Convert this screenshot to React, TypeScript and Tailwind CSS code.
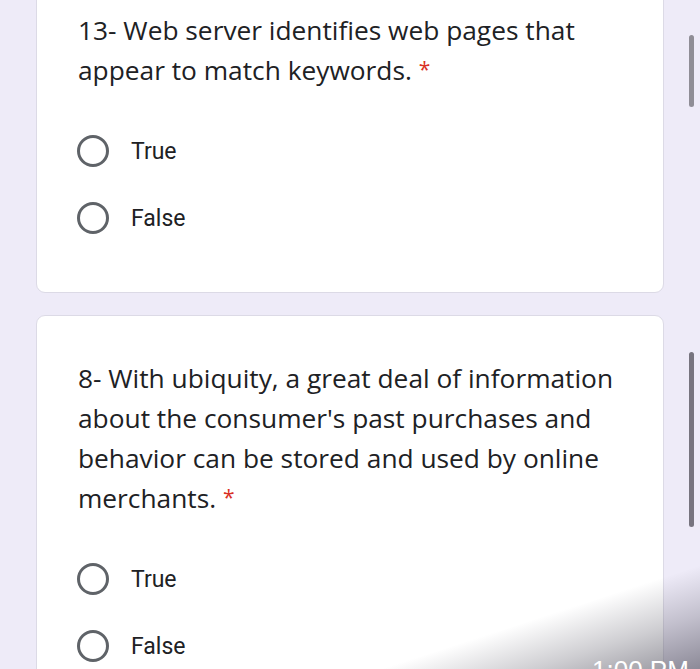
import React from "react";

function Radio({ label }: { label: string }) {
  return (
    <div className="flex h-[40px] items-center">
      <div className="ml-[-1px] h-[32px] w-[32px] rounded-full border-[3px] border-[#5f6368]" />
      <span
        className="ml-[22px] text-[23px] leading-none text-[#202124]"
        style={{ fontFamily: "Roboto, 'Liberation Sans', sans-serif" }}
      >
        {label}
      </span>
    </div>
  );
}

const qFont = { fontFamily: "'Open Sans', Roboto, 'Liberation Sans', sans-serif" };

function Star() {
  return <span className="relative top-[-3px] text-[21px] leading-none text-[#d93025]">*</span>;
}

export default function App() {
  return (
    <div className="relative h-[669px] w-[700px] overflow-hidden bg-[#eeebf8]">
      <div className="flex flex-col pl-[36px]">
        <div className="mt-[-20px] h-[313px] w-[628px] rounded-[9px] border border-[#dcdae6] bg-white pl-[41px] pt-[29px]">
          <p className="text-[26.3px] leading-[40px] text-[#202124]" style={qFont}>
            13- Web server identifies web pages that
            <br />
            appear to match keywords. <Star />
          </p>
          <div className="mt-[41px] flex flex-col gap-[27px]">
            <Radio label="True" />
            <Radio label="False" />
          </div>
        </div>
        <div className="mt-[22px] h-[400px] w-[628px] rounded-[9px] border border-[#dcdae6] bg-white pl-[41px] pt-[42px]">
          <p className="text-[26.3px] leading-[40px] text-[#202124]" style={qFont}>
            8- With ubiquity, a great deal of information
            <br />
            about the consumer's past purchases and
            <br />
            behavior can be stored and used by online
            <br />
            merchants. <Star />
          </p>
          <div className="mt-[41px] flex flex-col gap-[27px]">
            <Radio label="True" />
            <Radio label="False" />
          </div>
        </div>
      </div>

      <div className="absolute left-[689px] top-[35px] h-[72px] w-[5px] rounded-full bg-[#8f8d96]" />
      <div className="absolute left-[689px] top-[352px] h-[175px] w-[5px] rounded-full bg-[#77747f]" />

      <div className="pointer-events-none absolute bottom-0 left-0 h-[130px] w-[700px] bg-[linear-gradient(162deg,rgba(80,78,92,0)_71%,rgba(80,78,92,0.28)_85%,rgba(80,78,92,0.62)_100%)]" />
      <div
        className="absolute left-[592px] top-[657px] whitespace-nowrap text-[26px] leading-none text-white"
        style={{ fontFamily: "'Liberation Sans', Arial, sans-serif" }}
      >
        1:00 PM
      </div>
    </div>
  );
}
